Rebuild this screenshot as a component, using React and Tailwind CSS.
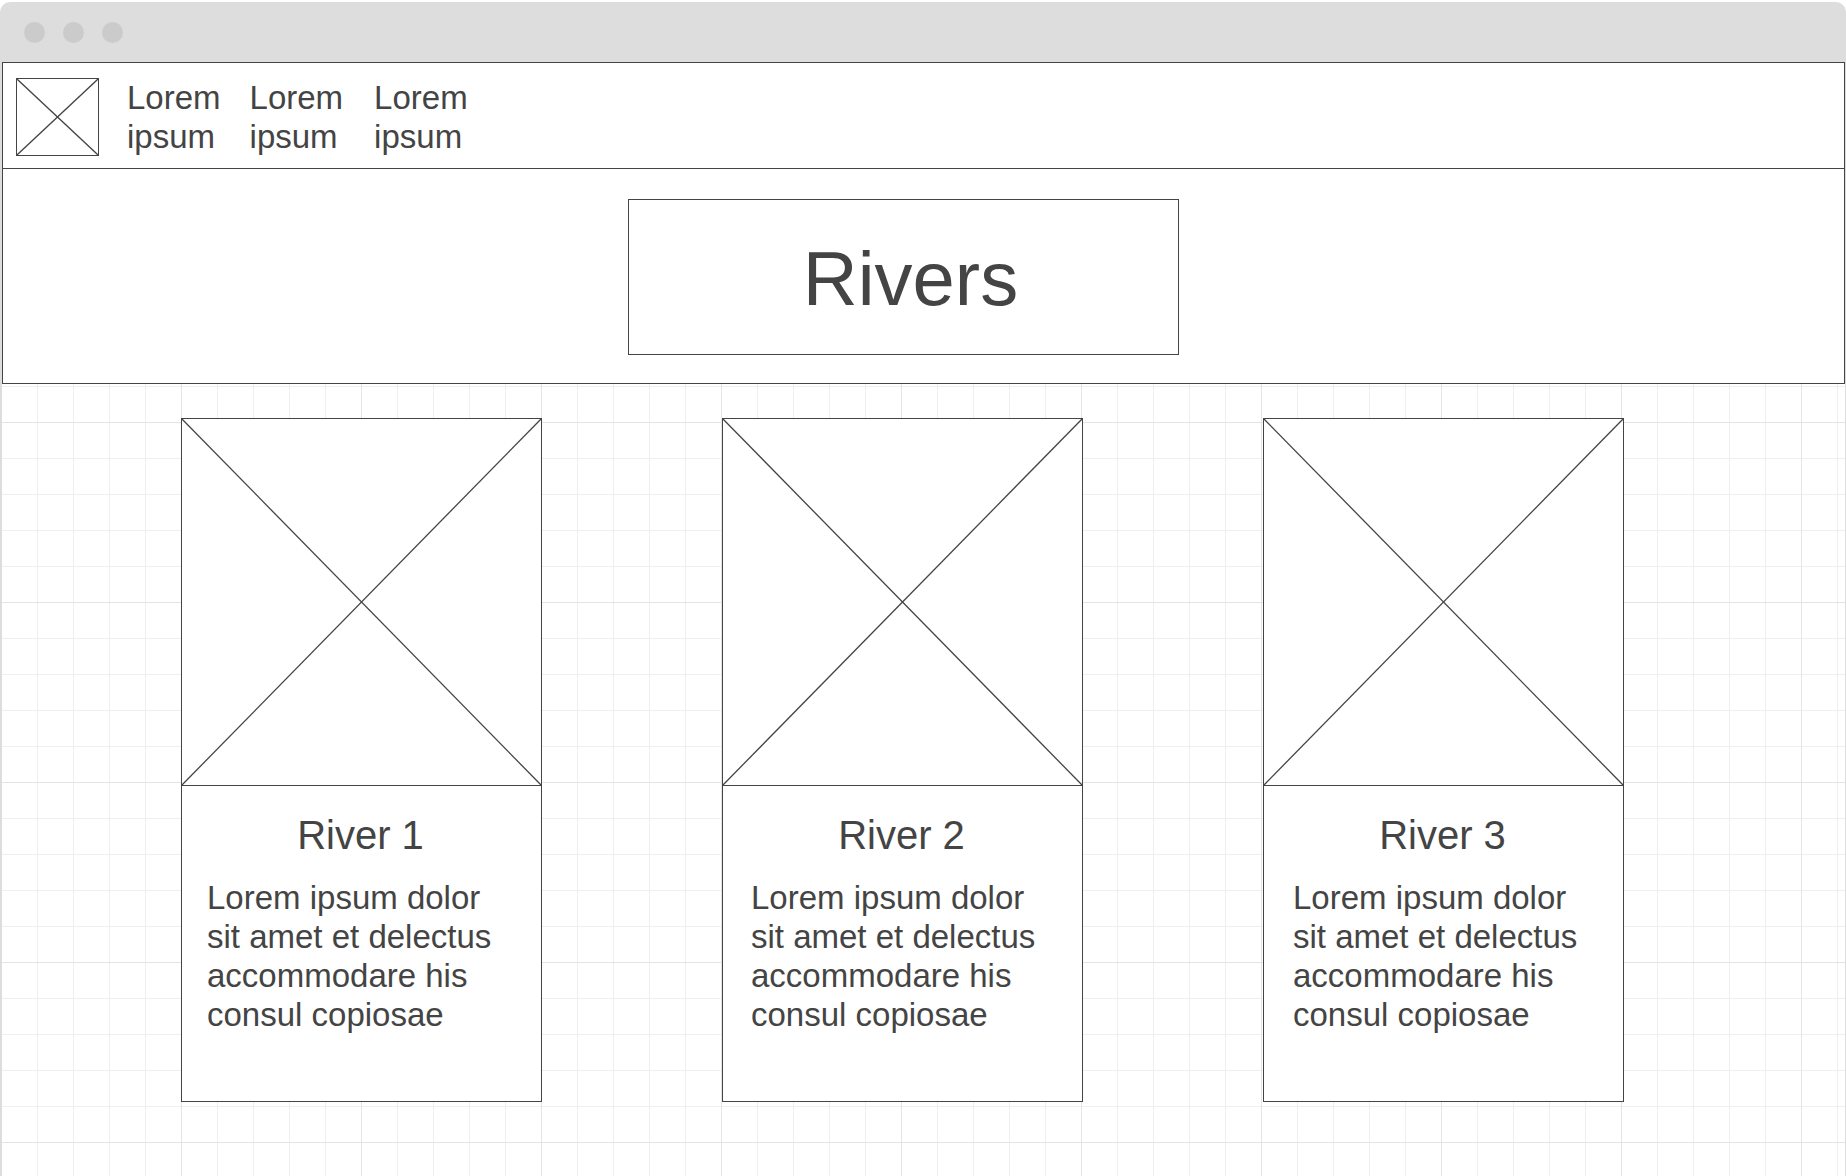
function XLines() {
  return (
    <svg className="block w-full h-full" viewBox="0 0 100 100" preserveAspectRatio="none">
      <line x1="0" y1="0" x2="100" y2="100" stroke="#444444" strokeWidth="1.3" vectorEffect="non-scaling-stroke" />
      <line x1="100" y1="0" x2="0" y2="100" stroke="#444444" strokeWidth="1.3" vectorEffect="non-scaling-stroke" />
    </svg>
  );
}

const cards = [
  { title: "River 1", pad: "pl-[25px] pr-[25px]" },
  { title: "River 2", pad: "pl-[28px] pr-[22px]" },
  { title: "River 3", pad: "pl-[29px] pr-[21px]" },
];

export default function App() {
  return (
    <div className="relative w-[1846px] h-[1176px] overflow-hidden font-['Liberation_Sans',Arial,sans-serif] text-[#444444] bg-white [background-image:linear-gradient(to_right,#e4e4e4_1px,transparent_1px),linear-gradient(to_bottom,#e4e4e4_1px,transparent_1px),linear-gradient(to_right,#efefef_1px,transparent_1px),linear-gradient(to_bottom,#efefef_1px,transparent_1px)] [background-size:180px_180px,180px_180px,36px_36px,36px_36px] [background-position:1px_62px,1px_62px,1px_26px,1px_26px]">
      {/* window title bar */}
      <div className="bg-white pt-[2px]">
        <div className="h-[60px] bg-[#dddddd] rounded-t-[10px] flex items-center pl-[24px] gap-[18px]">
          <span className="w-[21px] h-[21px] rounded-full bg-[#cbcbcb]" />
          <span className="w-[21px] h-[21px] rounded-full bg-[#cbcbcb]" />
          <span className="w-[21px] h-[21px] rounded-full bg-[#cbcbcb]" />
        </div>
      </div>

      <div className="border-l-2 border-r border-[#dddddd] h-[1114px]">
        {/* header */}
        <div className="flex items-start border border-[#444444] bg-white h-[107px] pl-[13px] pt-[15px]">
          <div className="w-[83px] h-[78px] border border-[#444444] shrink-0">
            <XLines />
          </div>
          <div className="flex ml-[28px] text-[33px] leading-[39px]">
            <div className="mr-[29px]">Lorem<br />ipsum</div>
            <div className="mr-[31px]">Lorem<br />ipsum</div>
            <div>Lorem<br />ipsum</div>
          </div>
        </div>

        {/* hero */}
        <div className="h-[215px] border-x border-b border-[#444444] bg-white pt-[30px]">
          <div className="ml-[625px] w-[551px] h-[156px] border border-[#444444] flex items-center justify-center pl-[14px] pt-[3px] text-[76px] leading-none">
            Rivers
          </div>
        </div>

        {/* cards */}
        <div className="flex gap-[180px] ml-[179px] mt-[34px]">
          {cards.map((c) => (
            <div key={c.title} className="w-[361px] h-[684px] border border-[#444444] bg-white flex flex-col">
              <div className="h-[367px] border-b border-[#444444]">
                <XLines />
              </div>
              <div className="pt-[25px] pr-[2px] text-center text-[40px] leading-[48px]">{c.title}</div>
              <div className={"mt-[19px] text-[33px] leading-[39px] " + c.pad}>
                Lorem ipsum dolor sit amet et delectus accommodare his consul copiosae
              </div>
            </div>
          ))}
        </div>
      </div>
    </div>
  );
}
